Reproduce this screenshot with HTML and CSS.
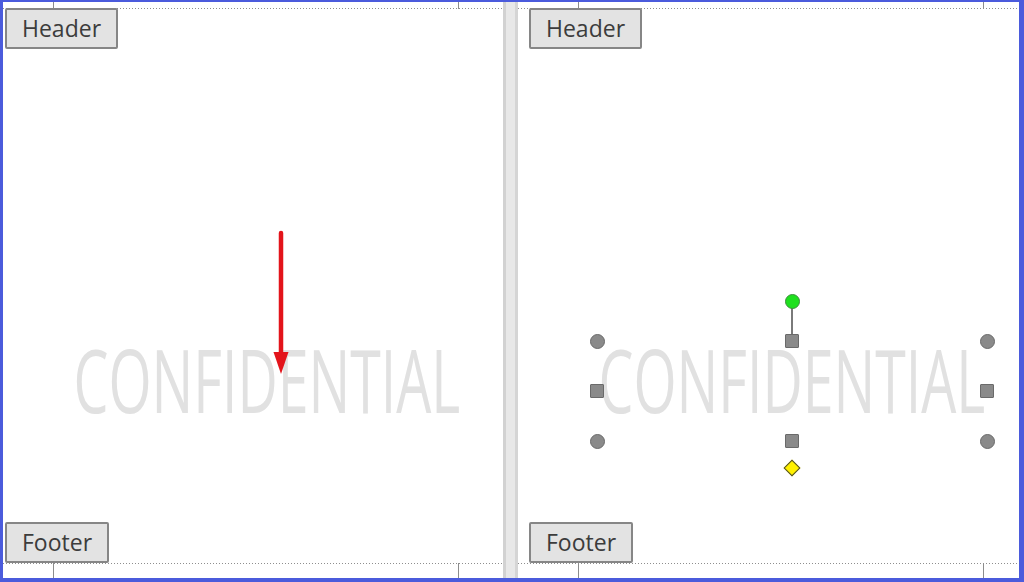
FILE: index.html
```html
<!DOCTYPE html>
<html lang="en">
<head>
<meta charset="utf-8">
<title>Header / Footer watermark</title>
<link rel="stylesheet" href="styles.css">
</head>
<body>
<div class="frame">
  <section class="panel panel-left">
    <div class="strip strip-top"><span class="mark mark-l"></span><span class="mark-gap"></span><span class="mark mark-r"></span></div>
    <div class="tab tab-header">Header</div>
    <div class="page-body">
      <div class="watermark"><span class="wm-text">CONFIDENTIAL</span></div>
      <svg class="arrow" width="20" height="146" viewBox="0 0 20 146" aria-hidden="true">
        <line x1="10" y1="3" x2="10" y2="126" stroke="#e3141b" stroke-width="4.5" stroke-linecap="round"/>
        <polygon points="2.5,122 17.5,122 10,144" fill="#e3141b"/>
      </svg>
    </div>
    <div class="tab tab-footer">Footer</div>
    <div class="strip strip-bottom"><span class="mark mark-l"></span><span class="mark-gap"></span><span class="mark mark-r"></span></div>
  </section>
  <div class="gutter"></div>
  <section class="panel panel-right">
    <div class="strip strip-top"><span class="mark mark-l"></span><span class="mark-gap"></span><span class="mark mark-r"></span></div>
    <div class="tab tab-header">Header</div>
    <div class="page-body">
      <div class="watermark selected">
        <span class="wm-text">CONFIDENTIAL</span>
        <span class="stem"></span>
        <span class="handle rotate"></span>
        <span class="handle circle tl"></span>
        <span class="handle square tm"></span>
        <span class="handle circle tr"></span>
        <span class="handle square ml"></span>
        <span class="handle square mr"></span>
        <span class="handle circle bl"></span>
        <span class="handle square bm"></span>
        <span class="handle circle br"></span>
        <span class="diamond"></span>
      </div>
    </div>
    <div class="tab tab-footer">Footer</div>
    <div class="strip strip-bottom"><span class="mark mark-l"></span><span class="mark-gap"></span><span class="mark mark-r"></span></div>
  </section>
</div>
</body>
</html>
```

FILE: styles.css
```css
* { box-sizing: border-box; }

html, body {
  margin: 0;
  padding: 0;
  background: #ffffff;
}

.frame {
  width: 1024px;
  height: 582px;
  display: flex;
  border-style: solid;
  border-color: #4b5bdc;
  border-width: 2px 5px 4px 3px;
  background: #ffffff;
  font-family: "Open Sans", "DejaVu Sans", sans-serif;
  overflow: hidden;
}

.panel {
  display: flex;
  flex-direction: column;
  height: 100%;
}

.panel-left {
  width: 500px;
  --ml: 50px;
  --mr: 45px;
  --tab: 2px;
  --wm: 69px;
}

.panel-right {
  flex: 1;
  --ml: 60px;
  --mr: 36px;
  --tab: 11px;
  --wm: 79px;
}

.gutter {
  width: 15px;
  height: 100%;
  background: #e8e8e8;
  border-left: 3px solid #d2d2d2;
  border-right: 3px solid #d5d5d5;
}

/* margin strips with crop marks and dotted boundary */
.strip {
  display: flex;
  background-image: linear-gradient(to right, #8e8e8e 0 1.5px, transparent 1.5px 3px);
  background-size: 3px 1px;
  background-repeat: repeat-x;
}

.strip-top {
  height: 7px;
  background-position: left bottom;
}

.strip-bottom {
  height: 15px;
  background-position: left top;
}

.mark-l {
  width: calc(var(--ml) + 1px);
  border-right: 1px solid #8c8c8c;
}

.mark-gap {
  flex: 1;
}

.mark-r {
  width: var(--mr);
  border-left: 1px solid #8c8c8c;
}

/* Header / Footer labels */
.tab {
  position: relative;
  z-index: 1;
  align-self: flex-start;
  margin-left: var(--tab);
  height: 41px;
  padding: 0 15px;
  border: 2px solid #868686;
  border-radius: 2px;
  background: #e3e3e3;
  color: #3c3c3c;
  font-size: 23px;
  line-height: 37px;
  white-space: nowrap;
}

.tab-header {
  margin-top: -1px;
}

.page-body {
  position: relative;
  flex: 1;
  display: flex;
  flex-direction: column;
  align-items: flex-start;
}

.watermark {
  position: relative;
  width: 390px;
  height: 100px;
  margin-top: 292px;
  margin-left: var(--wm);
  display: flex;
  justify-content: center;
  align-items: flex-start;
}

.wm-text {
  flex: none;
  display: block;
  font-family: "Open Sans", "DejaVu Sans", sans-serif;
  font-size: 88px;
  line-height: 76px;
  color: #e1e1e1;
  white-space: nowrap;
  transform: scaleX(0.63);
  transform-origin: 50% 50%;
}

.arrow {
  position: absolute;
  left: 268px;
  top: 181px;
}

/* selection handles */
.handle {
  position: absolute;
  width: 14px;
  height: 14px;
  margin: -7px 0 0 -7px;
  background: #8a8a8a;
  border: 1px solid #6a6a6a;
}

.circle { border-radius: 50%; width: 15px; height: 15px; margin: -7.5px 0 0 -7.5px; }
.square { border-radius: 1px; }

.tl { left: 0; top: 0; }
.tm { left: 50%; top: 0; }
.tr { left: 100%; top: 0; }
.ml { left: 0; top: 50%; }
.mr { left: 100%; top: 50%; }
.bl { left: 0; top: 100%; }
.bm { left: 50%; top: 100%; }
.br { left: 100%; top: 100%; }

.rotate {
  left: 50%;
  top: -40px;
  width: 15px;
  height: 15px;
  margin: -7.5px 0 0 -7.5px;
  border-radius: 50%;
  background: #1ee01e;
  border: 1px solid #3c8f3c;
}

.stem {
  position: absolute;
  left: 50%;
  top: -34px;
  width: 2px;
  height: 28px;
  margin-left: -1px;
  background: #7a7a7a;
}

.diamond {
  position: absolute;
  left: 50%;
  top: calc(100% + 27px);
  width: 12px;
  height: 12px;
  margin: -6px 0 0 -6px;
  background: #fff000;
  border: 1.5px solid #4a4a2a;
  transform: rotate(45deg);
}
```
